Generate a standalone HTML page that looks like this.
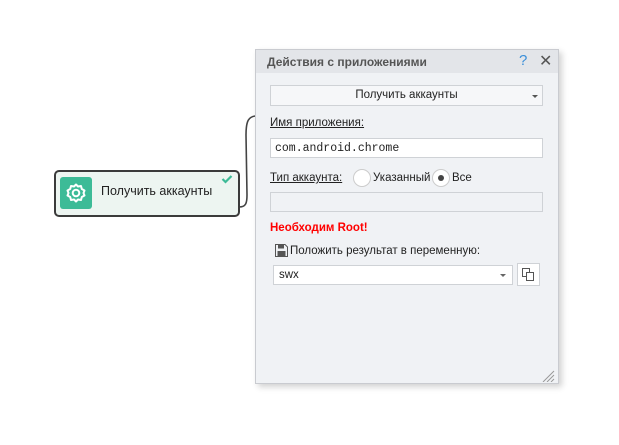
<!DOCTYPE html>
<html><head><meta charset="utf-8"><style>
body{margin:0;width:619px;height:445px;background:#fff;position:relative;overflow:hidden;font-family:"Liberation Sans",sans-serif;font-size:11.5px;color:#222}
.a{position:absolute;box-sizing:border-box}
.panel{left:255px;top:49px;width:304px;height:335px;background:#f0f2f5;border:1px solid #c9cbd0;box-shadow:3px 3px 6px rgba(0,0,0,.18)}
.hdr{left:0;top:0;width:302px;height:23px;background:#e3e5e9}
.inp{background:#fff;border:1px solid #cfd2d6}
</style></head><body>
<svg class="a" style="left:236px;top:110px" width="24" height="110"><path d="M3 97 C10 97 11 93 11 85 L10 25 C10 10 13 7 19 6" fill="none" stroke="#444" stroke-width="1.6"/></svg>
<div class="a" style="left:54px;top:170px;width:186px;height:47px;border:2px solid #3b3b3b;border-radius:5px;background:#edf5f1"></div>
<div class="a" style="left:60px;top:177px;width:32px;height:32px;background:#3dbb97;border-radius:3px"></div>
<svg class="a" style="left:64px;top:181px" width="24" height="24" viewBox="0 0 24 24"><path d="M12 3.5 L14 5.5 L17 5 L17.8 8 L20.5 9.5 L19.5 12 L20.5 14.5 L17.8 16 L17 19 L14 18.5 L12 20.5 L10 18.5 L7 19 L6.2 16 L3.5 14.5 L4.5 12 L3.5 9.5 L6.2 8 L7 5 L10 5.5 Z" fill="none" stroke="#fff" stroke-width="2" stroke-linejoin="round"/><circle cx="12" cy="12" r="3.3" fill="none" stroke="#fff" stroke-width="2"/></svg>
<div class="a" style="left:101px;top:184px;font-size:12.5px;color:#222">Получить аккаунты</div>
<svg class="a" style="left:221px;top:174px" width="12" height="10"><path d="M1.5 5 L4.5 8 L10.5 2" fill="none" stroke="#3dbb97" stroke-width="2.2"/></svg>

<div class="a panel">
<div class="a hdr"></div>
<div class="a" style="left:11px;top:5px;font-weight:bold;color:#555;font-size:12px">Действия с приложениями</div>
<div class="a" style="left:263px;top:2px;color:#3b8fd9;font-size:15px">?</div>
<div class="a" style="left:283px;top:1px;color:#555;font-size:16px">✕</div>
<div class="a inp" style="left:14px;top:35px;width:273px;height:21px;background:#f6f7f9"></div>
<div class="a" style="left:14px;top:39px;width:273px;text-align:center">Получить аккаунты</div>
<div class="a" style="left:276px;top:45px;border:3px solid transparent;border-top:3px solid #555"></div>
<div class="a" style="left:14px;top:67px;text-decoration:underline">Имя приложения:</div>
<div class="a inp" style="left:14px;top:88px;width:273px;height:20px"></div>
<div class="a" style="left:19px;top:92px;font-family:'Liberation Mono',monospace;font-size:11.5px">com.android.chrome</div>
<div class="a" style="left:14px;top:122px;text-decoration:underline">Тип аккаунта:</div>
<div class="a" style="left:97px;top:119px;width:18px;height:18px;border-radius:50%;background:#fff;border:1px solid #ccc"></div>
<div class="a" style="left:117px;top:122px">Указанный</div>
<div class="a" style="left:176px;top:119px;width:18px;height:18px;border-radius:50%;background:#fff;border:1px solid #ccc"></div>
<div class="a" style="left:182px;top:125px;width:6px;height:6px;border-radius:50%;background:#444"></div>
<div class="a" style="left:196px;top:122px">Все</div>
<div class="a" style="left:14px;top:142px;width:273px;height:20px;border:1px solid #cfd2d6;background:#f0f2f5"></div>
<div class="a" style="left:14px;top:172px;color:#f00;font-weight:bold">Необходим Root!</div>
<svg class="a" style="left:19px;top:194px" width="13" height="13"><path d="M0.5 0.5 H10 L12.5 3 V12.5 H0.5 Z" fill="none" stroke="#555"/><rect x="3" y="1" width="6" height="3.5" fill="#555"/><rect x="2.5" y="7" width="8" height="5" fill="#555"/></svg>
<div class="a" style="left:34px;top:195px">Положить результат в переменную:</div>
<div class="a inp" style="left:17px;top:215px;width:240px;height:20px"></div>
<div class="a" style="left:23px;top:219px">swx</div>
<div class="a" style="left:244px;top:224px;border:3px solid transparent;border-top:3px solid #666"></div>
<div class="a inp" style="left:261px;top:213px;width:23px;height:23px"></div>
<svg class="a" style="left:266px;top:218px" width="13" height="13"><rect x="0.5" y="0.5" width="7" height="8" fill="#fff" stroke="#555"/><rect x="4.5" y="4.5" width="7" height="8" fill="#fff" stroke="#555"/></svg>
<svg class="a" style="left:286px;top:320px" width="13" height="12"><path d="M12 1 L1 12 M12 5 L5 12 M12 9 L9 12" stroke="#999"/></svg>
</div>
</body></html>
